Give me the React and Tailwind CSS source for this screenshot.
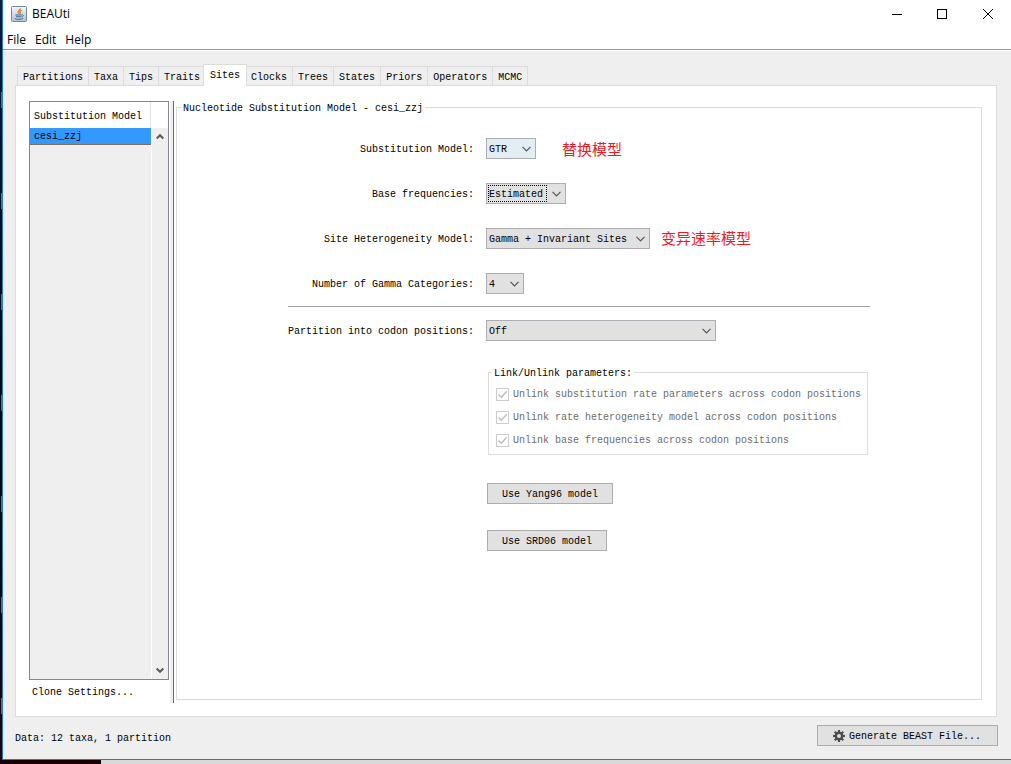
import React, { useState } from 'react';

const tabs = [
  'Partitions', 'Taxa', 'Tips', 'Traits', 'Sites', 'Clocks',
  'Trees', 'States', 'Priors', 'Operators', 'MCMC',
];

const unlinkOptions = [
  { id: 'unlink-rates', label: 'Unlink substitution rate parameters across codon positions' },
  { id: 'unlink-het', label: 'Unlink rate heterogeneity model across codon positions' },
  { id: 'unlink-freq', label: 'Unlink base frequencies across codon positions' },
];

function JavaIcon() {
  return (
    <svg width="16" height="16" viewBox="0 0 16 16" fill="none" aria-hidden="true">
      <defs>
        <linearGradient id="java-bg" x1="0" y1="0" x2="0" y2="1">
          <stop offset="0" stopColor="#f4f6f8" />
          <stop offset="1" stopColor="#b4c2ce" />
        </linearGradient>
      </defs>
      <rect x="0.5" y="0.5" width="15" height="15" rx="1" fill="url(#java-bg)" stroke="#71899c" />
      <path d="M9.2 2.2c.6 1.8-3.4 2.6-2 4.4.5.6 1 .8.7 1.5M10.600 4.2c-1.600.7-2.200 1.400-1.500 2.200.5.6.2 1-.3 1.500" stroke="#e8762c" strokeWidth="1.3" />
      <path d="M4.4 9h6.2M5 10.8h5M10.8 8.8c2-.4 2 1.700-.4 2.200M3.800 12.600c1.600 1 6.600 1 8.400-.2" stroke="#3f6a88" strokeWidth="1" />
    </svg>
  );
}

function Chevron({ className }) {
  return (
    <svg className={className} width="9" height="6" viewBox="0 0 9 6" fill="none" aria-hidden="true">
      <path d="M.5 .8l4 4 4-4" stroke="#555" strokeWidth="1.2" />
    </svg>
  );
}

function ScrollArrow({ up }) {
  return (
    <svg width="8" height="7" viewBox="0 0 8 7" fill="none" aria-hidden="true">
      <path d={up ? 'M.7 5.5L4 2.2l3.3 3.3' : 'M.7 1.5L4 4.8l3.3-3.3'} stroke="#5a5a5a" strokeWidth="2" />
    </svg>
  );
}

function GearIcon() {
  return (
    <svg className="-mt-[2px]" width="12" height="12" viewBox="0 0 12 12" aria-hidden="true">
      <g fill="#4a4a4a">
        <rect x="4.9" y="0" width="2.2" height="12" />
        <rect x="4.9" y="0" width="2.2" height="12" transform="rotate(45 6 6)" />
        <rect x="4.9" y="0" width="2.2" height="12" transform="rotate(90 6 6)" />
        <rect x="4.9" y="0" width="2.2" height="12" transform="rotate(135 6 6)" />
        <circle cx="6" cy="6" r="4.2" />
      </g>
      <circle cx="6" cy="6" r="2" fill="#e1e1e1" />
    </svg>
  );
}

function Combo({ id, options, className, focused }) {
  return (
    <div className="relative flex">
      <select
        id={id}
        className={`h-[21px] appearance-none border border-[#adadb3] pt-[2px] pr-4 pl-[2px] outline-none ${className}`}
      >
        {options.map((o) => <option key={o}>{o}</option>)}
      </select>
      {focused && (
        <span className="pointer-events-none absolute top-[2px] right-[19px] bottom-[2px] left-[2px] border border-dotted border-black" />
      )}
      <Chevron className="pointer-events-none absolute top-2 right-[5px]" />
    </div>
  );
}

function FormRow({ id, label, note, children }) {
  return (
    <>
      <label htmlFor={id} className="pt-[2px] text-right whitespace-nowrap">{label}</label>
      <div className="flex h-[21px] items-center">
        {children}
        {note}
      </div>
    </>
  );
}

function TitleBar() {
  return (
    <header className="border-b border-[#999] bg-white">
      <div className="flex h-7 items-center justify-between pl-2">
        <div className="flex items-center gap-[5px]">
          <JavaIcon />
          <h1 className="text-[12px]">BEAUti</h1>
        </div>
        <div className="flex">
          <button type="button" aria-label="Minimize" className="flex h-7 w-[45px] items-center justify-center">
            <svg width="10" height="10" viewBox="0 0 10 10"><path d="M0 5.5h10" stroke="#000" /></svg>
          </button>
          <button type="button" aria-label="Maximize" className="flex h-7 w-[46px] items-center justify-center">
            <svg width="10" height="10" viewBox="0 0 10 10" fill="none"><rect x=".5" y=".5" width="9" height="9" stroke="#000" /></svg>
          </button>
          <button type="button" aria-label="Close" className="flex h-7 w-[46px] items-center justify-center">
            <svg width="10" height="10" viewBox="0 0 10 10"><path d="M0 0l10 10M10 0L0 10" stroke="#000" /></svg>
          </button>
        </div>
      </div>
      <nav className="flex h-[21px] gap-[9px] pl-1 text-[12px] leading-6">
        <button type="button">File</button>
        <button type="button">Edit</button>
        <button type="button">Help</button>
      </nav>
    </header>
  );
}

function ModelList() {
  return (
    <div className="flex w-[140px] shrink-0 flex-col">
      <div className="flex flex-1 border border-[#828790] bg-[#efefef]">
        <div className="flex-1 border-r border-white">
          <table className="w-full border-collapse">
            <thead>
              <tr>
                <th className="h-[26px] border-r border-[#e5e5e5] bg-white pt-[2px] pl-1 text-left font-normal whitespace-nowrap">
                  Substitution Model
                </th>
              </tr>
            </thead>
            <tbody>
              <tr>
                <td className="h-4 border-b border-[#82705c] bg-[#3399ff] pt-[2px] pl-1 leading-[14px]">cesi_zzj</td>
              </tr>
            </tbody>
          </table>
        </div>
        <div className="flex w-4 flex-col">
          <div className="h-[26px] bg-white" />
          <div className="flex flex-1 flex-col justify-between">
            <button type="button" aria-label="Scroll up" className="flex h-[17px] items-center justify-center"><ScrollArrow up /></button>
            <button type="button" aria-label="Scroll down" className="flex h-[17px] items-center justify-center"><ScrollArrow /></button>
          </div>
        </div>
      </div>
      <button type="button" className="h-[23px] pt-[2px] pl-[3px] text-left">Clone Settings...</button>
    </div>
  );
}

function SitesForm() {
  return (
    <div className="mx-auto w-fit">
      <div className="grid grid-cols-[186px_auto] items-center gap-x-3 gap-y-6">
        <FormRow
          id="subst"
          label="Substitution Model:"
          note={<span className="ml-[26px] pt-[2px] font-['Noto_Sans_CJK_SC',sans-serif] text-[15px] text-[#ed1c24]">替换模型</span>}
        >
          <Combo id="subst" options={['GTR', 'HKY', 'TN93']} className="w-[50px] bg-[#e3edf5]" />
        </FormRow>
        <FormRow id="freq" label="Base frequencies:">
          <Combo id="freq" options={['Estimated', 'Empirical', 'All equal']} className="w-20 bg-[#e1e1e1]" focused />
        </FormRow>
        <FormRow
          id="het"
          label="Site Heterogeneity Model:"
          note={<span className="ml-[11px] font-['Noto_Sans_CJK_SC',sans-serif] text-[15px] text-[#ed1c24]">变异速率模型</span>}
        >
          <Combo id="het" options={['Gamma + Invariant Sites', 'Gamma', 'Invariant Sites', 'None']} className="w-41 bg-[#e1e1e1]" />
        </FormRow>
        <FormRow id="cats" label="Number of Gamma Categories:">
          <Combo id="cats" options={['4', '5', '6', '7', '8']} className="w-[38px] bg-[#e1e1e1]" />
        </FormRow>
      </div>
      <hr className="mt-3 mb-[13px] border-[#a0a0a0]" />
      <div className="grid grid-cols-[186px_auto] items-center gap-x-3 gap-y-6">
        <FormRow id="codon" label="Partition into codon positions:">
          <Combo id="codon" options={['Off', '2 partitions: positions (1 + 2), 3', '3 partitions: positions 1, 2, 3']} className="w-[230px] bg-[#e1e1e1]" />
        </FormRow>
        <div className="col-start-2 flex flex-col items-start pt-px pr-[2px]">
          <fieldset className="ml-[2px] border border-[#dcdcdc] pr-[6px] pb-[6px] pl-[7px]">
            <legend className="-ml-1 px-[2px] pt-[3px] leading-[10px]">Link/Unlink parameters:</legend>
            <div className="flex flex-col gap-[7px] pt-[7px]">
              {unlinkOptions.map((o) => (
                <label key={o.id} htmlFor={o.id} className="flex h-4 items-center gap-1 whitespace-nowrap text-[#6d6d6d]">
                  <span className="relative flex">
                    <input
                      id={o.id}
                      type="checkbox"
                      defaultChecked
                      disabled
                      className="size-[13px] appearance-none border border-[#ccc] bg-white"
                    />
                    <svg className="pointer-events-none absolute inset-0" width="13" height="13" viewBox="0 0 13 13" fill="none">
                      <path d="M2.5 6.5l2.8 2.8 5.4-6" stroke="#bcbcbc" strokeWidth="1.4" />
                    </svg>
                  </span>
                  {o.label}
                </label>
              ))}
            </div>
          </fieldset>
          <button type="button" className="mt-7 ml-px h-[21px] border border-[#adadad] bg-[#e1e1e1] px-[14px] pt-[2px]">Use Yang96 model</button>
          <button type="button" className="mt-[26px] ml-px h-[21px] border border-[#adadad] bg-[#e1e1e1] px-[14px] pt-[2px]">Use SRD06 model</button>
        </div>
      </div>
    </div>
  );
}

export default function App() {
  const [active, setActive] = useState('Sites');

  return (
    <div className="flex min-h-screen flex-col bg-[#d9d9d9] font-['Open_Sans',sans-serif] text-black">
      <div className="flex flex-1">
        <div className="flex w-[2px] flex-col items-end gap-[85px] bg-gradient-to-b from-[#101c33] via-[#000510] to-[#250006] pt-[92px]">
          {tabs.slice(0, 7).map((tab) => <div key={tab} className="h-4 w-px bg-[#6b7078]" />)}
        </div>
        <div className="flex min-w-0 flex-1 flex-col border-b border-l border-[#1a7fcb] bg-[#efefef]">
          <TitleBar />
          <main className="flex flex-1 flex-col border-t border-white pt-[13px] pr-[14px] pl-3 font-['Liberation_Mono',monospace] text-[10px]">
            <div role="tablist" className="-mb-px flex items-end pl-[2px]">
              {tabs.map((tab) => (
                <button
                  key={tab}
                  type="button"
                  role="tab"
                  aria-selected={tab === active}
                  onClick={() => setActive(tab)}
                  className={
                    tab === active
                      ? 'relative -mx-[2px] h-[22px] border border-b-0 border-[#dcdcdc] bg-white px-[6px]'
                      : '-mr-px h-5 border border-[#dcdcdc] px-[5px] pt-[2px]'
                  }
                >
                  {tab}
                </button>
              ))}
            </div>
            <section className="flex flex-1 border border-[#dcdcdc] bg-white pt-[15px] pr-[14px] pb-[13px] pl-[13px]">
              <ModelList />
              <div className="ml-px w-1 border-r border-[#696969] bg-[#efefef]" />
              <fieldset className="mb-[3px] ml-[2px] min-w-0 flex-1 border border-[#dcdcdc]">
                <legend className="ml-1 px-[2px] pt-[3px] leading-[10px]">Nucleotide Substitution Model - cesi_zzj</legend>
                <div className="pt-6">
                  <SitesForm />
                </div>
              </fieldset>
            </section>
            <footer className="flex h-[42px] items-center justify-between">
              <p>Data: 12 taxa, 1 partition</p>
              <button type="button" className="-mr-px mb-[5px] flex h-[21px] items-center gap-1 border border-[#adadad] bg-[#e1e1e1] pt-[2px] pr-4 pl-[15px]">
                <GearIcon />
                Generate BEAST File...
              </button>
            </footer>
          </main>
        </div>
      </div>
      <div className="h-1">
        <div className="h-full w-1/10 bg-[#140004]" />
      </div>
    </div>
  );
}
